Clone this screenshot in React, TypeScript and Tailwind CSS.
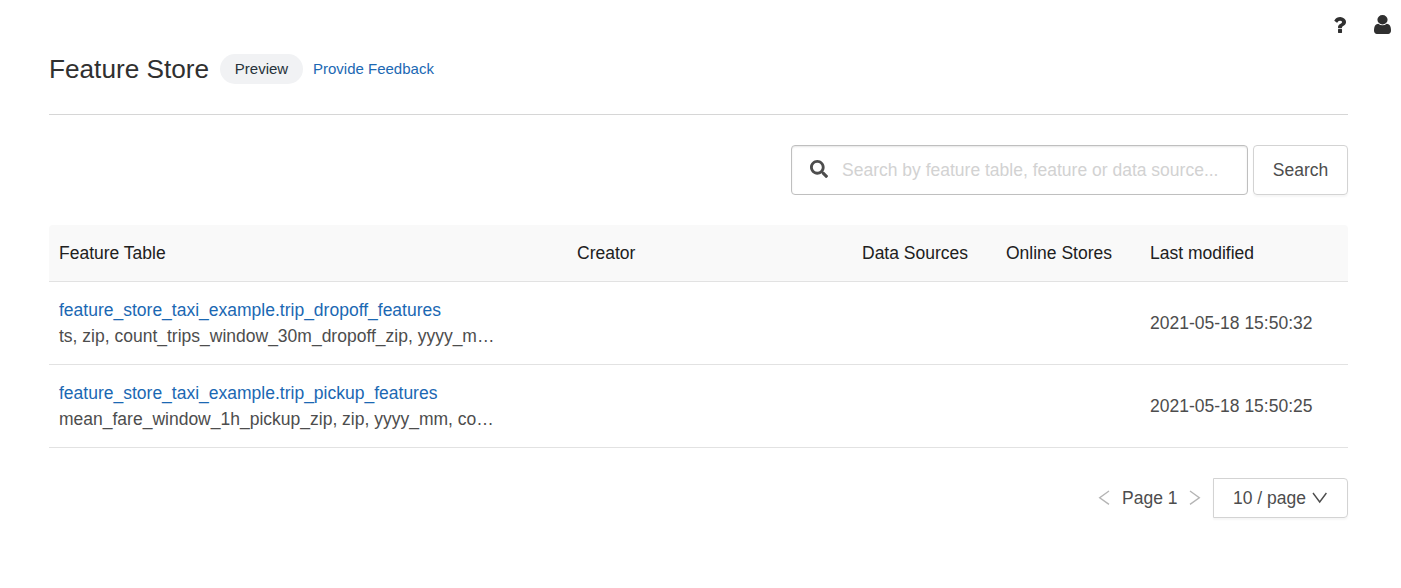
import { FaSearch } from "react-icons/fa";

const COLUMNS = "grid grid-cols-[518px_285px_144px_144px_208px]";

const TABLES = [
  {
    name: "feature_store_taxi_example.trip_dropoff_features",
    features: "ts, zip, count_trips_window_30m_dropoff_zip, yyyy_m…",
    modified: "2021-05-18 15:50:32",
  },
  {
    name: "feature_store_taxi_example.trip_pickup_features",
    features: "mean_fare_window_1h_pickup_zip, zip, yyyy_mm, co…",
    modified: "2021-05-18 15:50:25",
  },
];

function TopBar() {
  return (
    <nav className="flex h-[49px] items-center justify-end gap-[28px] pr-[10px]">
      <button aria-label="Help">
        <svg className="h-[16px] w-[12px]" viewBox="64 192 956 1280" preserveAspectRatio="none" fill="#303030">
          <path d="M704 1192v240q0 16-12 28t-28 12h-240q-16 0-28-12t-12-28v-240q0-16 12-28t28-12h240q16 0 28 12t12 28zm316-600q0 54-15.5 101t-35 76.5-55 59.5-57.5 43.5-61 35.5q-41 23-68.5 65t-27.5 67q0 17-12 32.5t-28 15.5h-240q-15 0-25.5-18.5t-10.5-37.5v-45q0-83 65-156.5t143-108.5q59-27 84-56t25-76q0-42-46.5-74t-107.5-32q-65 0-108 29-35 25-107 115-13 16-31 16-12 0-25-8l-164-125q-13-10-15.5-25t5.5-28q160-266 464-266 80 0 161 31t146 83 106 127.5 41 158.5z" />
        </svg>
      </button>
      <button aria-label="Account">
        <svg className="h-[19px] w-[17px]" viewBox="0 128 1280 1536" preserveAspectRatio="none" fill="#303030">
          <path d="M1280 1399q0 109-62.5 187t-150.5 78h-854q-88 0-150.5-78t-62.5-187q0-85 8.5-160.5t31.5-152 58.5-131 94-89 134.5-34.5q131 128 313 128t313-128q76 0 134.5 34.5t94 89 58.5 131 31.5 152 8.5 160.5zm-256-887q0 159-112.5 271.5t-271.5 112.5-271.5-112.5-112.5-271.5 112.5-271.5 271.5-112.5 271.5 112.5 112.5 271.5z" />
        </svg>
      </button>
    </nav>
  );
}

function Chevron({ path, className }: { path: string; className: string }) {
  return (
    <svg className={className} viewBox="0 0 16 16" fill="none" stroke="currentColor" strokeWidth="1.4">
      <path d={path} />
    </svg>
  );
}

export default function App() {
  return (
    <div className="h-[588px] overflow-hidden bg-white font-['Liberation_Sans',Arial,sans-serif] text-[17.5px] leading-[26px] text-[#4d4d4d]">
      <TopBar />
      <main className="ml-[49px] w-[1299px]">
        <header className="flex h-[66px] items-start border-b border-[#d6d6d6] pt-[5px]">
          <h1 className="w-[171px] text-[26.2px] leading-[30px] whitespace-nowrap text-[#303030]">Feature Store</h1>
          <span className="flex h-[30px] w-[83px] items-center justify-center rounded-full bg-[#f1f2f4] text-[15px] text-[#26323a]">
            Preview
          </span>
          <a className="ml-[10px] text-[15px] leading-[30px] text-[#1b68b3]">Provide Feedback</a>
        </header>

        <div className="mt-[30px] flex h-[50px] justify-end gap-[5px]">
          <label className="flex w-[457px] items-center rounded-[4px] border border-[#bfbfbf] pl-[18px] shadow-[inset_0_1px_2px_rgba(0,0,0,0.1)]">
            <FaSearch className="mb-[2px] size-[18px] text-[#4d4d4d]" />
            <input
              className="ml-[14px] min-w-0 flex-1 outline-none placeholder:text-[#d2d2d2]"
              placeholder="Search by feature table, feature or data source..."
            />
          </label>
          <button className="w-[95px] rounded-[4px] border border-[#d3d3d3] shadow-[0_2px_2px_rgba(0,0,0,0.04)]">
            Search
          </button>
        </div>

        <section className="mt-[30px]">
          <div className={`${COLUMNS} h-[57px] items-center rounded-t-[4px] border-b border-[#e2e2e2] bg-[#f9f9f9] pl-[10px] text-[#202020]`}>
            <span>Feature Table</span>
            <span>Creator</span>
            <span>Data Sources</span>
            <span>Online Stores</span>
            <span>Last modified</span>
          </div>
          {TABLES.map((table) => (
            <div key={table.name} className={`${COLUMNS} h-[83px] items-center border-b border-[#e2e2e2] pl-[10px]`}>
              <div className="whitespace-nowrap">
                <a className="block text-[#1b68b3]">{table.name}</a>
                <p>{table.features}</p>
              </div>
              <span className="col-start-5">{table.modified}</span>
            </div>
          ))}
        </section>

        <footer className="mt-[30px] flex h-[40px] items-center justify-end">
          <Chevron className="size-[16px] text-[#b5b5b5]" path="M13 1 3.7 7.7 13 14.4" />
          <span className="mr-[9.5px] ml-[10.5px] whitespace-nowrap">Page 1</span>
          <Chevron className="size-[16px] text-[#b5b5b5]" path="M3 1 12.3 7.7 3 14.4" />
          <button className="ml-[10px] flex h-[40px] w-[135px] items-center rounded-r-[4px] border border-[#d3d3d3] pl-[19px] shadow-[0_2px_2px_rgba(0,0,0,0.04)]">
            10 / page
            <Chevron className="ml-[6px] size-[16px] text-[#4d4d4d]" path="M1 3 7.7 12 14.4 3" />
          </button>
        </footer>
      </main>
    </div>
  );
}
